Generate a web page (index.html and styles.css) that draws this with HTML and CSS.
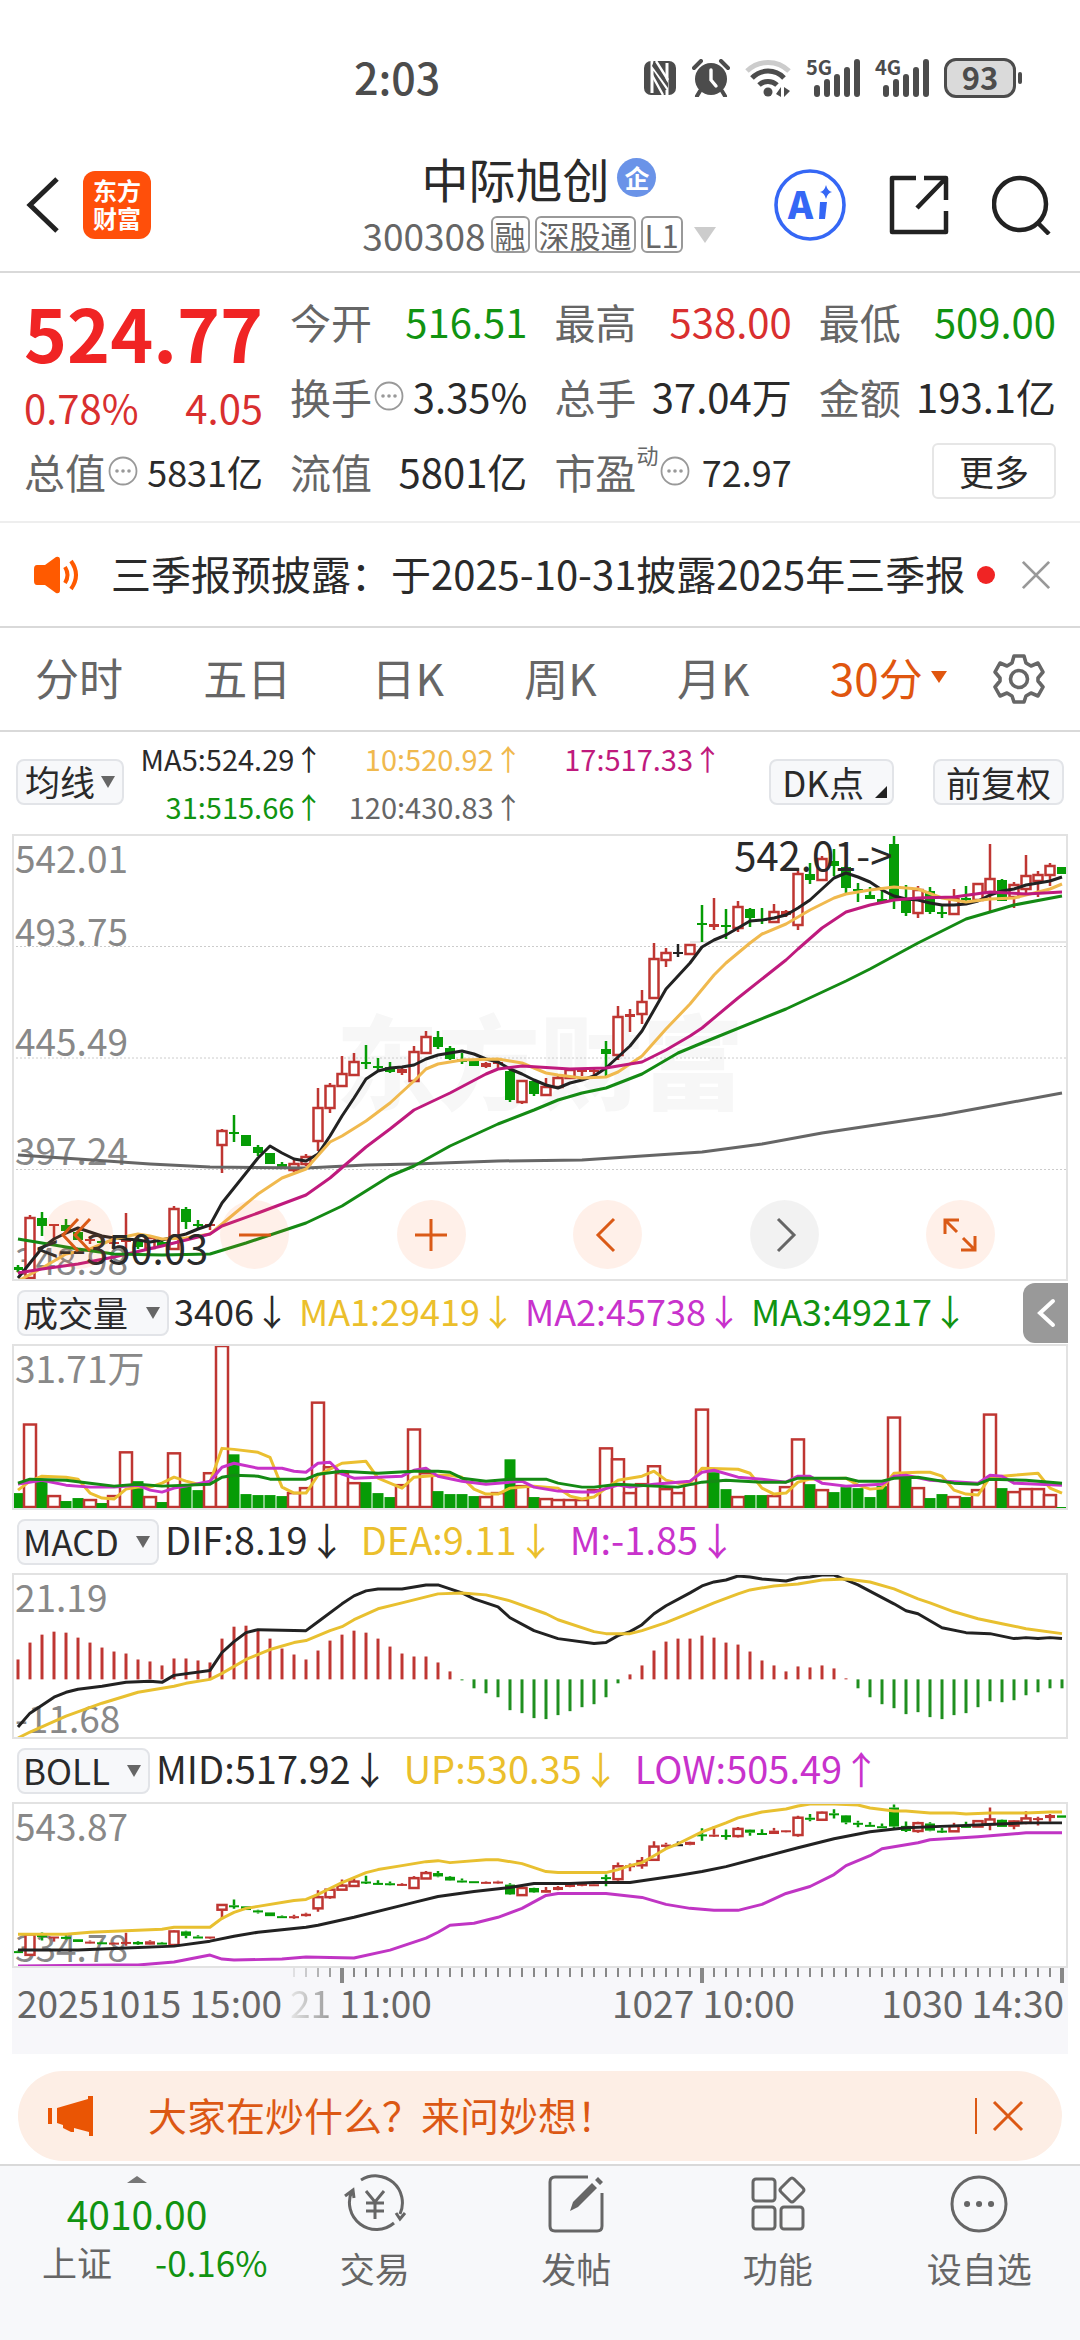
FILE: index.html
```html
<!DOCTYPE html>
<html lang="zh-CN">
<head>
  <meta charset="UTF-8">
  <meta name="viewport" content="width=device-width, initial-scale=1.0">
  <title>中际旭创 300308</title>
  <link rel="stylesheet" href="styles.css">
</head>
<body>

  <svg class="sprite" aria-hidden="true">
    <symbol id="info" viewBox="0 0 30 30">
      <circle cx="15" cy="15" r="13.5" fill="none" stroke="#999" stroke-width="1.8"/>
      <circle cx="9" cy="15" r="1.8" fill="#999"/><circle cx="15" cy="15" r="1.8" fill="#999"/><circle cx="21" cy="15" r="1.8" fill="#999"/>
    </symbol>
    <symbol id="cross" viewBox="0 0 32 32">
      <path d="M2 2L30 30M30 2L2 30" fill="none" stroke="currentColor" stroke-width="3"/>
    </symbol>
    <symbol id="bars" viewBox="0 0 54 38">
      <path d="M11 35V29M21 35V23M31 35V18M41 35V11M51 35V3" fill="none" stroke="#4c4c4c" stroke-width="6" stroke-linecap="round"/>
    </symbol>
  </svg>

  <!-- Status bar -->
  <div class="status">
    <span class="clock">2:03</span>
    <div class="status-icons">
      <svg width="34" height="36" viewBox="0 0 34 36"><rect x="1" y="1" width="32" height="34" rx="7" fill="#4c4c4c"/><path d="M9 33V6L24 28V3M24 35V30M9 1V6" fill="none" stroke="#fff" stroke-width="3"/><path d="M11 1L25 23V28L9 6Z" fill="#4c4c4c"/><path d="M13 1L25 20M9 15L20 35" stroke="#fff" stroke-width="2.4"/></svg>
      <svg width="38" height="38" viewBox="0 0 38 38"><circle cx="19" cy="20" r="16" fill="#4c4c4c"/><path d="M2 9L9 2M36 9L29 2M8 32L5 37M30 32L33 37" stroke="#4c4c4c" stroke-width="4" stroke-linecap="round"/><path d="M19 11V21L24 27" fill="none" stroke="#fff" stroke-width="3.4" stroke-linecap="round"/></svg>
      <svg width="46" height="38" viewBox="0 0 46 38"><path d="M2 12A30 30 0 0 1 44 12" fill="none" stroke="#ccc" stroke-width="5"/><path d="M7 19A22 22 0 0 1 39 19M14 26A13 13 0 0 1 32 26" fill="none" stroke="#4c4c4c" stroke-width="5"/><circle cx="23" cy="33" r="4.500" fill="#4c4c4c"/><path d="M36 28V38L31 35ZM39 28V38L45 32Z" fill="#4c4c4c"/></svg>
      <span class="signal"><b>5G</b><svg width="54" height="38"><use href="#bars"/></svg></span>
      <span class="signal"><b>4G</b><svg width="54" height="38"><use href="#bars"/></svg></span>
      <span class="battery">93</span>
    </div>
  </div>

  <!-- Header -->
  <header class="header">
    <div class="header-left">
      <button class="icon-button" aria-label="返回"><svg width="34" height="56" viewBox="0 0 34 56"><path d="M31 2L4 28L31 54" fill="none" stroke="#222" stroke-width="5"/></svg></button>
      <a class="logo" href="#">东方<br>财富</a>
    </div>
    <div class="stock">
      <h1 class="stock-name">中际旭创<span class="badge">企</span></h1>
      <div class="stock-code">300308<span class="tag">融</span><span class="tag">深股通</span><span class="tag">L1</span><i class="triangle light"></i></div>
    </div>
    <div class="header-right">
      <button class="icon-button" aria-label="Ai"><svg width="72" height="72" viewBox="0 0 72 72"><circle cx="36" cy="36" r="34" fill="#fff" stroke="#3567f5" stroke-width="3.6"/><text x="14" y="50" class="ai-text">A</text><path d="M46 33H53L51 50H45Z" fill="#3567f5"/><path d="M52 16Q53.500 22 58 23Q53.500 24 52 30Q50.500 24 46 23Q50.500 22 52 16Z" fill="#3567f5"/></svg></button>
      <button class="icon-button" aria-label="分享"><svg width="60" height="60" viewBox="0 0 60 60"><path d="M27 3H3V57H57V36M35 3H57V25M57 3L28 33" fill="none" stroke="#222" stroke-width="4.500" stroke-linejoin="round"/></svg></button>
      <button class="icon-button" aria-label="搜索"><svg width="60" height="60" viewBox="0 0 60 60"><circle cx="28" cy="29" r="26" fill="none" stroke="#222" stroke-width="4.500"/><path d="M46 48L57 59" stroke="#222" stroke-width="4.500"/></svg></button>
    </div>
  </header>

  <!-- Quote -->
  <section class="quote">
    <div class="price red">
      <strong>524.77</strong>
      <div class="cell"><span>0.78%</span><span>4.05</span></div>
    </div>
    <div class="cell"><label>今开</label><span class="green">516.51</span></div>
    <div class="cell"><label>最高</label><span class="red">538.00</span></div>
    <div class="cell"><label>最低</label><span class="green">509.00</span></div>
    <div class="cell"><label>换手<svg class="info"><use href="#info"/></svg></label><span>3.35%</span></div>
    <div class="cell"><label>总手</label><span>37.04万</span></div>
    <div class="cell"><label>金额</label><span>193.1亿</span></div>
    <div class="cell"><label>总值<svg class="info"><use href="#info"/></svg></label><span class="small">5831亿</span></div>
    <div class="cell"><label>流值</label><span>5801亿</span></div>
    <div class="cell"><label>市盈<sup>动</sup><svg class="info"><use href="#info"/></svg></label><span class="small">72.97</span></div>
    <div class="cell cell-more"><button class="more">更多</button></div>
  </section>

  <!-- Notice -->
  <div class="notice">
    <svg width="46" height="40" viewBox="0 0 46 40"><path d="M3 10H11L22 2Q26 1 26 5V35Q26 39 22 38L11 30H3Q0 30 0 26V14Q0 10 3 10Z" fill="#ff5a00"/><path d="M31 12Q36 20 31 28M37 6Q47 20 37 34" fill="none" stroke="#ff5a00" stroke-width="4"/></svg>
    <a class="notice-text" href="#">三季报预披露：于2025-10-31披露2025年三季报</a>
    <i class="dot"></i>
    <button class="icon-button notice-close" aria-label="关闭"><svg width="30" height="30"><use href="#cross"/></svg></button>
  </div>

  <!-- Periods -->
  <nav class="periods">
    <button>分时</button>
    <button>五日</button>
    <button>日K</button>
    <button>周K</button>
    <button>月K</button>
    <button class="active">30分<i class="triangle"></i></button>
    <button class="gear" aria-label="设置"><svg width="52" height="52" viewBox="0 0 52 52"><path d="M21 3H31L33 10L38 13L45 10L50 19L45 25V28L50 34L45 43L38 40L33 43L31 49H21L19 43L14 40L7 43L2 34L7 28V25L2 19L7 10L14 13L19 10Z" fill="none" stroke="#666" stroke-width="3.6" stroke-linejoin="round"/><circle cx="26" cy="26" r="8.500" fill="none" stroke="#666" stroke-width="3.6"/></svg></button>
  </nav>

  <main class="charts">
    <div class="ma-bar">
      <span class="picker"><select aria-label="均线"><option>均线</option></select></span>
      <div class="ma-list">
        <span>MA5:524.29↑</span>
        <span class="ma10">10:520.92↑</span>
        <span class="ma17">17:517.33↑</span>
        <span class="ma31">31:515.66↑</span>
        <span class="ma120">120:430.83↑</span>
      </div>
      <button class="chip corner">DK点</button>
      <button class="chip">前复权</button>
    </div>

    <!-- Candles -->
    <div class="plot plot-main">
      <div class="watermark">东方财富</div>
      <div class="levels">
        <div><span>542.01</span><span>493.75</span></div>
        <div><span>445.49</span></div>
        <div><span>397.24</span></div>
        <div><span>348.98</span></div>
      </div>
      <svg id="candles" viewBox="2 1 1052 443" preserveAspectRatio="none"></svg>
      <span class="mark mark-high">542.01-&gt;</span>
      <span class="mark mark-low">&lt;--350.03</span>
      <div class="tools">
        <button aria-label="最左"><svg viewBox="0 0 40 40"><path d="M19 4L4 20L19 36M31 4L16 20L31 36"/></svg></button>
        <button aria-label="缩小"><svg viewBox="0 0 40 40"><path d="M4 20H36"/></svg></button>
        <button aria-label="放大"><svg viewBox="0 0 40 40"><path d="M4 20H36M20 4V36"/></svg></button>
        <button aria-label="左移"><svg viewBox="0 0 40 40"><path d="M26 4L10 20L26 36"/></svg></button>
        <button class="disabled" aria-label="右移"><svg viewBox="0 0 40 40"><path d="M14 4L30 20L14 36"/></svg></button>
        <button aria-label="全屏"><svg viewBox="0 0 40 40"><path d="M5 19V5H19M5 5L17 17M35 21V35H21M35 35L23 23"/></svg></button>
      </div>
    </div>

    <div class="indicator volume-bar">
      <span class="picker wide"><select aria-label="成交量"><option>成交量</option></select></span>
      <span>3406↓</span>
      <span class="yellow">MA1:29419↓</span>
      <span class="purple">MA2:45738↓</span>
      <span class="green">MA3:49217↓</span>
      <button class="drawer" aria-label="展开"><svg width="20" height="30" viewBox="0 0 20 30"><path d="M17 3L4 15L17 27" fill="none" stroke="#fff" stroke-width="4" stroke-linecap="round"/></svg></button>
    </div>
    <div class="plot">
      <div class="levels"><div><span>31.71万</span></div></div>
      <svg id="volume" viewBox="2 1 1052 163" preserveAspectRatio="none"></svg>
    </div>

    <div class="indicator">
      <span class="picker wide"><select aria-label="MACD"><option>MACD</option></select></span>
      <span>DIF:8.19↓</span>
      <span class="yellow">DEA:9.11↓</span>
      <span class="purple">M:-1.85↓</span>
    </div>
    <div class="plot">
      <div class="levels"><div><span>21.19</span><span>-11.68</span></div></div>
      <svg id="macd" viewBox="2 1 1052 163" preserveAspectRatio="none"></svg>
    </div>

    <div class="indicator">
      <span class="picker wide"><select aria-label="BOLL"><option>BOLL</option></select></span>
      <span>MID:517.92↓</span>
      <span class="yellow">UP:530.35↓</span>
      <span class="purple">LOW:505.49↑</span>
    </div>
    <div class="plot">
      <div class="levels"><div><span>543.87</span><span>334.78</span></div></div>
      <svg id="boll" viewBox="2 1 1052 163" preserveAspectRatio="none"></svg>
    </div>

    <div class="axis">
      <svg id="ticks" viewBox="0 0 1056 16" preserveAspectRatio="none"></svg>
      <div class="axis-labels">
        <span>20251015 15:00</span>
        <span class="second"><span class="fade">21</span> 11:00</span>
        <span class="third">1027 10:00</span>
        <span>1030 14:30</span>
      </div>
    </div>
  </main>

  <!-- Banner -->
  <div class="banner">
    <svg width="46" height="40" viewBox="0 0 46 40"><path d="M0 12H4V28H0ZM9 12L40 3V0H45V40H41V36L26 32V36H23L19 34L15 32V29L9 27Z" fill="#ea5504"/></svg>
    <a href="#">大家在炒什么？来问妙想！</a>
    <button class="icon-button banner-close" aria-label="关闭"><svg width="32" height="32"><use href="#cross"/></svg></button>
  </div>

  <!-- Bottom bar -->
  <footer class="bottom">
    <a class="index" href="#">
      <i class="triangle up"></i>
      <span class="index-value green">4010.00</span>
      <span class="index-row"><span>上证</span><span class="green">-0.16%</span></span>
    </a>
    <a class="action" href="#">
      <svg width="66" height="60" viewBox="0 0 66 60"><path d="M19 6A27 27 0 0 1 58 40M52 49A27 27 0 0 1 10 17M3 22L11 16L12 24M63 39L58 45L54 39M24 17L33 28L42 17M33 28V45M24 29H42M24 37H42"/></svg>
      <span>交易</span>
    </a>
    <a class="action" href="#">
      <svg width="60" height="60" viewBox="0 0 60 60"><path d="M42 3H9Q4 3 4 8V52Q4 57 9 57H51Q56 57 56 52V19"/><path d="M24 37L27 28L46 9L51 14L32 33ZM49 6L52 3L57 8L54 11Z" fill="#666" stroke="none"/></svg>
      <span>发帖</span>
    </a>
    <a class="action" href="#">
      <svg width="60" height="60" viewBox="0 0 60 60"><rect x="5" y="5" width="22" height="22" rx="3"/><rect x="5" y="33" width="22" height="22" rx="3"/><rect x="33" y="33" width="22" height="22" rx="3"/><path d="M42 5Q44 3 46 5L55 14Q57 16 55 18L46 27Q44 29 42 27L33 18Q31 16 33 14Z"/></svg>
      <span>功能</span>
    </a>
    <a class="action" href="#">
      <svg width="60" height="60" viewBox="0 0 60 60"><circle cx="30" cy="30" r="27"/><path d="M18 30H18.100M30 30H30.100M42 30H42.100" stroke-width="6" stroke-linecap="round"/></svg>
      <span>设自选</span>
    </a>
  </footer>

  <script src="charts.js"></script>
</body>
</html>
```
FILE: styles.css
```css
* {
  box-sizing: border-box;
}

body {
  margin: 0;
  min-height: 100vh;
  display: flex;
  flex-direction: column;
  font-family: "Noto Sans CJK SC", "Noto Sans", sans-serif;
  font-size: 40px;
  background-color: #fff;
  color: #2a2a2a;
}

button,
select {
  font: inherit;
  color: inherit;
  background: none;
  border: none;
  padding: 0;
  margin: 0;
}

a {
  color: inherit;
  text-decoration: none;
}

svg {
  display: block;
}

.sprite {
  position: absolute;
  width: 0;
  height: 0;
}

.red {
  color: #d92f2f;
}

.green {
  color: #119311;
}

.yellow {
  color: #ebbf2c;
}

.purple {
  color: #c832cc;
}

.triangle {
  display: inline-block;
  border: 8px solid transparent;
  border-top: 12px solid currentColor;
  border-bottom: 0;
}

.triangle.light {
  border-width: 16px 11px 0;
  color: #ccc;
}

.triangle.up {
  border-width: 0 10px 7px;
  border-bottom: 7px solid #777;
  border-top: 0;
}

.icon-button {
  display: flex;
}

/* status bar */
.status {
  height: 130px;
  padding: 26px 64px 0 354px;
  display: flex;
  align-items: center;
  justify-content: space-between;
  color: #4c4c4c;
}

.clock {
  padding-bottom: 4px;
  font-size: 43px;
  font-weight: 500;
}

.status-icons {
  display: flex;
  align-items: center;
  gap: 15px;
}

.signal {
  position: relative;
}

.signal b {
  position: absolute;
  left: 0;
  top: -2px;
  font-size: 20px;
  line-height: 20px;
}

.battery {
  position: relative;
  width: 72px;
  height: 40px;
  border: 3px solid #4c4c4c;
  border-radius: 12px;
  background: #dadada;
  text-align: center;
  font-size: 31px;
  line-height: 32px;
  font-weight: 700;
}

.battery::after {
  content: "";
  position: absolute;
  right: -9px;
  top: 11px;
  width: 4px;
  height: 12px;
  border-radius: 2px;
  background: #4c4c4c;
}

/* header */
.header {
  height: 143px;
  padding: 8px 28px 0 26px;
  border-bottom: 2px solid #d9d9d9;
  display: grid;
  grid-template-columns: 1fr auto 1fr;
  align-items: center;
}

.header-left,
.header-right {
  display: flex;
  align-items: center;
  gap: 23px;
}

.header-right {
  justify-content: flex-end;
  gap: 43px;
}

.logo {
  width: 68px;
  height: 68px;
  padding: 5px 0;
  border-radius: 12px;
  background: #ff4f0a;
  color: #fff;
  text-align: center;
  font-size: 24px;
  line-height: 28px;
  font-weight: 700;
}

.stock {
  display: flex;
  flex-direction: column;
  align-items: center;
}

.stock-name {
  margin: 0;
  display: flex;
  align-items: center;
  gap: 8px;
  font-size: 47px;
  line-height: 60px;
  font-weight: 400;
}

.badge {
  width: 39px;
  height: 39px;
  border-radius: 50%;
  background: #6a93e8;
  color: #fff;
  font-size: 25px;
  line-height: 38px;
  font-weight: 700;
  text-align: center;
}

.stock-code {
  display: flex;
  align-items: center;
  gap: 5px;
  color: #666;
  font-size: 37px;
  line-height: 54px;
}

.tag {
  padding: 0 2px;
  border: 2px solid #999;
  border-radius: 6px;
  font-size: 31px;
  line-height: 33px;
}

.stock-code .triangle {
  margin-left: 6px;
}

.ai-text {
  font-size: 38px;
  font-weight: 900;
  fill: #3567f5;
}

/* quote */
.quote {
  padding: 10px 24px 13px;
  border-bottom: 2px solid #eee;
  display: grid;
  grid-template-columns: repeat(4, 1fr);
  grid-auto-rows: 75px;
  column-gap: 27px;
}

.price {
  grid-row: span 2;
  display: flex;
  flex-direction: column;
}

.price strong {
  color: #f02424;
  font-size: 73px;
  line-height: 96px;
  text-align: center;
}

.cell {
  display: flex;
  align-items: center;
  justify-content: space-between;
  white-space: nowrap;
  line-height: 56px;
}

.cell label {
  display: flex;
  align-items: center;
  color: #666;
  font-size: 41px;
}

.cell sup {
  align-self: flex-start;
  font-size: 22px;
  line-height: 22px;
}

.info {
  width: 30px;
  height: 30px;
  margin-left: 2px;
}

.small {
  font-size: 36px;
}

.cell-more {
  justify-content: flex-end;
}

.more {
  width: 124px;
  height: 56px;
  border: 2px solid #e6e6e6;
  border-radius: 6px;
  font-size: 35px;
  line-height: 48px;
}

/* notice */
.notice {
  height: 105px;
  padding: 0 29px 0 34px;
  border-bottom: 2px solid #d9d9d9;
  display: flex;
  align-items: center;
}

.notice-text {
  margin-left: 31px;
  padding-bottom: 4px;
  font-size: 40px;
  white-space: nowrap;
}

.dot {
  width: 18px;
  height: 18px;
  margin-left: 12px;
  border-radius: 50%;
  background: #f02424;
}

.notice-close {
  margin-left: auto;
  color: #999;
}

/* periods */
.periods {
  height: 104px;
  padding: 0 35px;
  border-bottom: 2px solid #d9d9d9;
  display: flex;
  align-items: center;
  justify-content: space-between;
  color: #666;
  font-size: 44px;
}

.periods button {
  display: flex;
  align-items: center;
  padding-bottom: 4px;
}

.periods .gear {
  padding: 0;
}

.periods .active {
  margin-right: -34px;
  color: #e0560f;
}

.periods .triangle {
  margin-left: 8px;
}

/* charts */
.charts {
  padding: 0 12px;
}

.ma-bar {
  height: 102px;
  padding: 0 4px 2px;
  display: flex;
  align-items: center;
}

.picker,
.chip {
  position: relative;
  height: 46px;
  border: 2px solid #e2e4e8;
  border-radius: 8px;
  background: #f7f8fa;
  font-size: 35px;
  line-height: 38px;
}

.picker select {
  appearance: none;
  display: block;
  height: 40px;
  padding: 0 26px 0 7px;
}

.picker::after {
  content: "";
  position: absolute;
  right: 7px;
  top: 15px;
  border: 7px solid transparent;
  border-top: 12px solid #666;
  border-bottom: 0;
  pointer-events: none;
}

.picker.wide select {
  padding: 0 38px 0 4px;
}

.ma-list {
  width: 598px;
  display: grid;
  grid-template-columns: repeat(3, 1fr);
  text-align: right;
  font-size: 29px;
  line-height: 48px;
}

.ma10 {
  color: #f0b94e;
}

.ma17 {
  color: #bf1a7d;
}

.ma31 {
  color: #119311;
}

.ma120 {
  color: #666;
}

.chip {
  padding: 0 11px;
  margin-left: 39px;
}

.chip.corner {
  margin-left: auto;
  padding-right: 28px;
}

.corner::after {
  content: "";
  position: absolute;
  right: 5px;
  bottom: 5px;
  border-left: 12px solid transparent;
  border-bottom: 12px solid #222;
}

.plot {
  position: relative;
  height: 166px;
  border: 2px solid #e2e2e2;
}

.plot-main {
  height: 447px;
}

.plot > svg {
  position: relative;
  width: 100%;
  height: 100%;
  pointer-events: none;
}

.levels {
  position: absolute;
  inset: 0 0 4px;
  padding-left: 1px;
  display: flex;
  flex-direction: column;
  color: #888;
  font-size: 37px;
  line-height: 32px;
}

.levels div {
  flex: 1;
  display: flex;
  flex-direction: column;
  justify-content: flex-end;
}

.levels div:first-child {
  justify-content: space-between;
}

.levels div:first-child span:first-child {
  margin-top: 5px;
}

.watermark {
  position: absolute;
  inset: 0;
  display: flex;
  align-items: center;
  justify-content: center;
  color: #f7f7f7;
  font-size: 102px;
  font-weight: 900;
}

.mark {
  position: absolute;
  font-size: 40px;
  line-height: 40px;
}

.mark-high {
  top: -2px;
  right: 16.5%;
}

.mark-low {
  left: 22px;
  bottom: 12px;
}

.tools {
  position: absolute;
  left: 30px;
  right: 71px;
  bottom: 10px;
  display: flex;
  justify-content: space-between;
}

.tools button {
  width: 69px;
  height: 69px;
  border-radius: 50%;
  background: rgba(255, 105, 35, 0.1);
  display: flex;
  align-items: center;
  justify-content: center;
}

.tools svg {
  width: 40px;
  height: 40px;
  fill: none;
  stroke: #da5a17;
  stroke-width: 3;
}

.tools .disabled {
  background: rgba(0, 0, 0, 0.05);
}

.tools .disabled svg {
  stroke: #666;
}

.indicator {
  height: 63px;
  padding-left: 5px;
  display: flex;
  align-items: center;
  gap: 15px;
  font-size: 38px;
  line-height: 60px;
  white-space: nowrap;
}

.indicator > span:not(.picker) {
  padding-bottom: 5px;
}

.indicator .picker {
  margin-right: -9px;
}

.volume-bar {
  gap: 9px;
  font-size: 36px;
}

.volume-bar .picker {
  margin-right: -4px;
}

.drawer {
  width: 45px;
  height: 60px;
  margin-left: auto;
  border-radius: 12px 0 0 12px;
  background: #999;
  display: flex;
  align-items: center;
  justify-content: center;
}

.axis {
  height: 86px;
  background: #f7f7fa;
}

.axis > svg {
  width: 100%;
  height: 16px;
}

.axis-labels {
  padding: 0 4px 0 5px;
  display: flex;
  color: #666;
  font-size: 37px;
  line-height: 36px;
  white-space: nowrap;
}

.second {
  margin-left: 8px;
}

.third {
  margin: 0 auto;
  padding-left: 94px;
}

.fade {
  background: linear-gradient(90deg, #e6e6e6, #999);
  background-clip: text;
  color: transparent;
}

/* banner */
.banner {
  height: 90px;
  margin: 17px 18px 3px;
  padding: 0 38px 0 30px;
  border-radius: 45px;
  background: #fdeee5;
  color: #dc5814;
  font-size: 39px;
  display: flex;
  align-items: center;
  gap: 54px;
}

.banner a {
  padding-bottom: 5px;
}

.banner-close {
  margin-left: auto;
  padding: 2px 0 2px 15px;
  border-left: 2px solid #dc5814;
}

/* bottom bar */
.bottom {
  flex: 1;
  min-height: 175px;
  border-top: 2px solid #d9d9d9;
  background: #f7f8fa;
  color: #666;
  display: grid;
  grid-template-columns: 34fr repeat(4, 25fr);
}

.index {
  padding-top: 10px;
  display: flex;
  flex-direction: column;
  align-items: center;
}

.index-value {
  margin-top: 5px;
  font-size: 39px;
  line-height: 50px;
}

.index-row {
  display: flex;
  gap: 43px;
  margin-left: 42px;
  align-self: flex-start;
  font-size: 35px;
  line-height: 48px;
}

.action {
  padding-top: 8px;
  display: flex;
  flex-direction: column;
  align-items: center;
  font-size: 35px;
  line-height: 48px;
}

.action svg {
  margin-bottom: 10px;
  fill: none;
  stroke: #666;
  stroke-width: 3;
}
```
FILE: charts.js
```js
const STEP = 12;
const RED = '#bf3632';
const GREEN = '#069c06';
const BLACK = '#222';

// r = up, g = down, k = flat; then high, body top, body bottom, low
const candles = `
g430,432,435,437 r380,383,443,444 g377,383,391,401 r389,389,391,404 g384,390,396,398 g397,397,405,405
r401,404,406,409 g404,406,408,408 r406,407,408,408 r378,405,407,416 g403,405,412,414 r400,403,413,414
g405,407,411,411 r371,374,414,414 g372,374,387,394 g385,389,391,393 r389,389,391,395 r294,296,310,338
g280,297,299,307 g300,300,311,311 g310,312,318,321 g318,318,329,329 g327,329,332,334 r325,329,335,337
r319,322,329,331 r253,273,306,316 r248,251,273,278 r221,239,251,252 r218,227,240,240 g210,227,229,234
g223,231,233,235 g227,232,237,238 r232,234,238,240 r211,217,246,246 r196,202,218,218 g196,202,212,214
g211,213,224,225 g218,224,227,229 g226,226,231,231 r227,228,232,233 r225,227,229,233 g232,236,265,267
r245,246,267,269 g245,246,259,261 r243,252,260,261 r240,243,252,253 r234,235,243,244 r233,234,237,241
r234,235,237,240 g206,214,219,241 r171,182,220,225 r174,179,182,197 r155,167,179,189 r108,124,163,164
r113,118,125,132 k109,117,119,122 r109,110,119,120 g70,88,89,107 r63,89,92,95 g74,90,91,104
r66,72,93,97 g73,74,83,92 g73,84,86,89 r69,77,87,87 r75,76,80,82 r33,39,90,95
g28,39,45,49 r21,24,45,45 g14,26,31,41 g31,32,53,58 g48,54,56,67 g52,60,64,64
g56,64,67,67 g0,9,65,74 g50,63,78,81 r51,55,78,83 g52,56,77,79 g69,77,79,83
r54,64,79,79 g51,63,65,67 r48,49,65,65 r9,44,58,76 g44,45,66,66 r47,50,62,73
r20,41,54,58 r36,40,46,62 r28,31,40,51 g32,32,39,39
`.trim().split(/\s+/).map(c => [c[0], ...c.slice(1).split(',').map(Number)]);

const volumes = `
g15 r85 g29 r13 g7 g10 r9 g5 r13 r57 g27 r12 g6 r56 g22 g18 r36 r164 g54 g14 g13 g13 g12 r16 r21 r107 r42 r36 r26
g26 g15 g11 r24 r80 r36 g17 g14 g14 g12 r12 r16 g49 r23 g11 r10 r9 r9 r9 r19 r61 r50 r16 r25 r43 r20 r16 r25 r100
g36 g19 r12 g13 g13 r13 r22 r70 g24 r19 g16 g21 g20 g11 g22 r92 g30 r21 g10 g14 r12 g11 r19 r95 g20 r17 r20 r20 r14 g1
`.trim().split(/\s+/);

const macdBars = [
  20, 37, 45, 48, 47, 42, 37, 32, 28, 26, 20, 18, 14, 21, 21, 19, 17, 41, 53, 54, 50, 41, 31, 25, 20, 29, 39, 45, 49, 47,
  41, 33, 26, 23, 23, 17, 8, -1, -9, -14, -18, -31, -34, -39, -40, -36, -32, -28, -25, -18, -4, 5, 14, 29, 38, 41, 41, 44,
  42, 37, 35, 28, 19, 14, 8, 13, 12, 14, 11, 1, -9, -18, -25, -29, -35, -33, -38, -40, -36, -34, -28, -22, -23, -21, -16,
  -13, -9, -9
];

// "index,y" pairs
const ma5 = '0,443 1,428 2,413 3,404 4,398 5,393 6,397 7,401 8,403 9,404 10,405 11,407 12,405 13,402 14,399 15,394 16,390 17,368 18,353 19,338 20,323 21,311 22,318 23,324 24,326 25,319 26,301 27,281 28,263 29,244 30,236 31,233 32,232 33,230 34,224 35,220 36,218 37,216 38,219 39,224 40,227 41,234 42,239 43,245 44,250 45,253 46,248 47,245 48,241 49,233 50,222 51,211 52,196 53,175 54,154 55,141 56,128 57,112 58,105 59,100 60,93 61,86 62,85 63,83 64,80 65,73 66,65 67,54 68,43 69,38 70,42 71,47 72,55 73,61 74,64 75,65 76,68 77,70 78,70 79,69 80,66 81,60 82,56 83,54 84,50 85,48 86,46 87,42';
const ma10 = '0,446 2,433 4,419 6,414 7,409 8,404 10,399 11,401 12,404 14,403 16,399 17,389 18,379 20,359 22,343 24,334 26,307 27,301 29,286 31,268 33,246 34,234 35,229 37,225 40,224 41,226 42,228 43,233 44,238 45,240 47,243 49,242 50,237 51,229 52,221 54,194 56,169 58,140 59,128 61,108 62,99 64,89 65,82 66,75 67,69 68,63 69,59 71,55 73,52 74,53 75,54 77,63 78,65 79,67 81,64 83,63 85,57 86,54 87,49';
const ma17 = '0,438 2,434 5,429 8,422 12,411 16,399 17,391 20,378 24,360 26,343 29,312 31,294 33,275 36,258 39,239 40,234 42,231 46,234 49,233 52,227 54,215 56,201 57,193 60,163 64,125 65,114 67,93 69,77 71,70 73,65 75,63 78,62 81,57 84,59 87,57';
const ma31 = '0,404 2,408 5,414 8,419 12,420 16,419 19,408 24,388 27,371 31,341 33,331 36,311 40,289 43,275 45,265 47,258 49,253 52,239 55,218 57,208 64,174 69,146 71,134 75,108 77,96 79,84 83,70 87,61';
const ma120 = '0,320 5,324 11,329 16,332 24,333 29,330 33,329 40,326 47,325 52,321 57,317 62,309 67,298 72,289 77,280 82,269 87,258';

const vol1 = '0,146 1,137 2,132 4,133 5,135 6,149 7,154 8,155 9,145 10,143 11,143 12,139 13,133 14,137 15,140 16,138 17,104 18,105 20,108 21,113 22,143 23,149 24,149 25,131 26,125 27,119 28,118 29,117 30,134 31,139 32,144 33,133 35,131 36,131 37,133 38,145 39,150 40,150 41,144 43,142 45,144 46,152 47,155 48,153 49,144 50,136 52,132 53,127 54,136 55,139 56,139 57,124 60,125 61,129 62,144 63,150 64,149 65,138 66,135 69,134 70,141 71,145 72,144 73,129 75,128 76,128 77,132 78,146 79,150 80,151 81,133 83,131 85,129 86,144 87,149';
const vol2 = '0,140 2,136 4,141 6,143 8,143 10,141 11,146 12,148 13,144 14,142 16,137 17,123 18,119 20,124 22,124 23,127 24,128 25,119 26,118 27,130 28,134 30,133 32,132 33,126 34,124 35,132 37,137 39,140 42,137 43,143 45,147 47,148 48,148 50,141 51,143 53,140 56,137 57,128 58,126 60,133 62,135 64,138 65,132 66,132 67,139 69,142 72,140 73,132 74,131 76,136 80,139 81,131 82,132 83,139 87,141';
const vol3 = '0,139 1,135 4,136 6,139 8,142 10,140 12,142 16,140 17,133 18,131 20,132 21,135 24,135 25,130 27,127 30,129 33,127 35,127 36,128 37,134 39,137 41,135 44,135 45,139 47,143 48,143 50,140 53,142 55,143 57,138 59,136 62,138 64,138 65,134 69,134 70,137 72,137 73,134 75,133 78,139 80,140 81,135 84,136 87,139';

const dif = '0,154 1,140 3,124 4,119 5,116 7,113 9,109 11,108 12,109 13,102 16,97 17,79 18,68 19,59 20,56 24,57 25,48 27,30 28,22 29,17 30,15 32,15 34,11 35,11 37,19 38,25 40,33 41,44 43,57 44,61 45,65 48,70 49,69 50,62 51,58 52,51 53,40 54,32 56,19 57,12 58,8 59,6 60,2 61,3 62,5 64,7 65,4 66,3 67,1 68,1 69,6 70,11 73,30 74,37 75,40 77,54 79,59 81,60 83,65 84,64 85,65 86,64 87,65';
const dea = '0,165 1,159 4,143 7,130 10,119 13,113 14,110 16,106 17,100 19,86 21,76 23,69 24,67 26,57 27,53 28,46 30,35 32,29 35,20 37,19 39,21 41,27 44,40 45,46 48,58 49,60 51,60 52,57 54,49 56,39 58,29 60,20 61,16 63,12 65,10 67,6 69,5 71,8 73,15 75,25 76,29 78,38 80,45 82,50 84,55 87,60';

const upper = '0,132 4,132 6,130 8,129 12,127 13,125 16,125 17,116 18,110 19,106 20,104 23,98 24,97 25,92 27,80 28,75 29,70 30,67 32,63 34,59 35,58 36,60 39,57 40,57 42,61 44,69 45,70 49,70 50,67 51,63 52,60 53,53 54,46 55,41 57,29 59,20 60,15 62,9 64,6 65,3 66,1 68,1 70,2 71,5 73,8 74,8 76,10 78,10 79,11 81,10 84,10 86,9 87,9';
const middle = '0,148 5,148 9,146 13,144 16,139 18,134 20,130 24,125 25,123 28,115 32,103 33,100 35,94 38,89 41,85 43,81 46,81 48,80 51,80 55,73 57,69 59,64 65,45 68,36 71,29 74,25 78,23 84,20 87,20';
const lower = '0,164 8,163 10,163 13,160 16,153 17,157 18,158 22,157 24,155 28,156 31,148 33,140 34,136 35,130 36,123 38,121 40,115 42,106 44,93 45,91 49,91 52,95 54,102 56,106 58,108 60,108 62,102 64,91 66,84 68,72 69,63 71,53 72,46 75,40 76,37 80,34 84,30 87,30';

function x(i) {
  return i * STEP + STEP / 2;
}

function line(data, color) {
  const points = data.split(' ').map(p => {
    const [i, y] = p.split(',').map(Number);
    return `${x(i)},${y}`;
  }).join(' ');
  return `<polyline points="${points}" fill="none" stroke="${color}" stroke-width="3" stroke-linejoin="round"/>`;
}

function candle([type, high, top, bottom, low], i, scale) {
  const color = { r: RED, g: GREEN, k: BLACK }[type];
  const [h, t, b, l] = [high, top, bottom, low].map(scale);
  const height = Math.max(b - t, 2);
  const wick = `<path d="M${x(i)} ${h}V${t}M${x(i)} ${b}V${l}" stroke="${color}" stroke-width="2.5"/>`;
  if (type === 'r' && height > 4) {
    return wick + `<rect x="${x(i) - 4.5}" y="${t}" width="9" height="${height}" fill="#fff" stroke="${color}" stroke-width="2.5"/>`;
  }
  return wick + `<rect x="${x(i) - 5}" y="${t}" width="10" height="${height}" fill="${color}"/>`;
}

function draw(id, parts) {
  document.getElementById(id).innerHTML = parts.join('');
}

// Candles
draw('candles', [
  '<path d="M0 111.500H1056M0 223H1056M0 334.500H1056" stroke="#ccc" stroke-dasharray="2 2"/>',
  '<path d="M678 107H1056" stroke="#ccc"/>',
  ...candles.map((c, i) => candle(c, i, v => v)),
  line(ma120, '#666'),
  line(ma5, BLACK),
  line(ma10, '#f0b94e'),
  line(ma17, '#bf1a7d'),
  line(ma31, '#148a14')
]);

// Volume
draw('volume', [
  ...volumes.map((v, i) => {
    const h = Number(v.slice(1));
    if (v[0] === 'r') {
      return `<rect x="${x(i) - 6}" y="${165 - h}" width="12" height="${h - 2}" fill="#fff" stroke="${RED}" stroke-width="2.5"/>`;
    }
    return `<rect x="${x(i) - 5.5}" y="${164 - h}" width="11" height="${h}" fill="${GREEN}"/>`;
  }),
  line(vol1, '#ebbf30'),
  line(vol2, '#c832c8'),
  line(vol3, '#148a14')
]);

// MACD
draw('macd', [
  ...macdBars.map((v, i) => `<path d="M${x(i)} 106V${106 - v}" stroke="${v > 0 ? RED : '#1f8f1f'}" stroke-width="3"/>`),
  line(dif, BLACK),
  line(dea, '#e8c030')
]);

// BOLL
draw('boll', [
  ...candles.map((c, i) => candle(c, i, v => 1.5 + v * 0.3415)),
  line(middle, BLACK),
  line(lower, '#c035c4'),
  line(upper, '#e8c030')
]);

// Time axis
const ticks = [];
for (let i = 23; i < 88; i++) {
  const major = i % 30 === 27;
  const opacity = Math.min(1, (i - 22) / 5);
  ticks.push(`<path d="M${x(i)} 0V${major ? 15 : 9}" stroke="#888" stroke-width="${major ? 4 : 2}" opacity="${opacity}"/>`);
}
draw('ticks', ticks);
```
